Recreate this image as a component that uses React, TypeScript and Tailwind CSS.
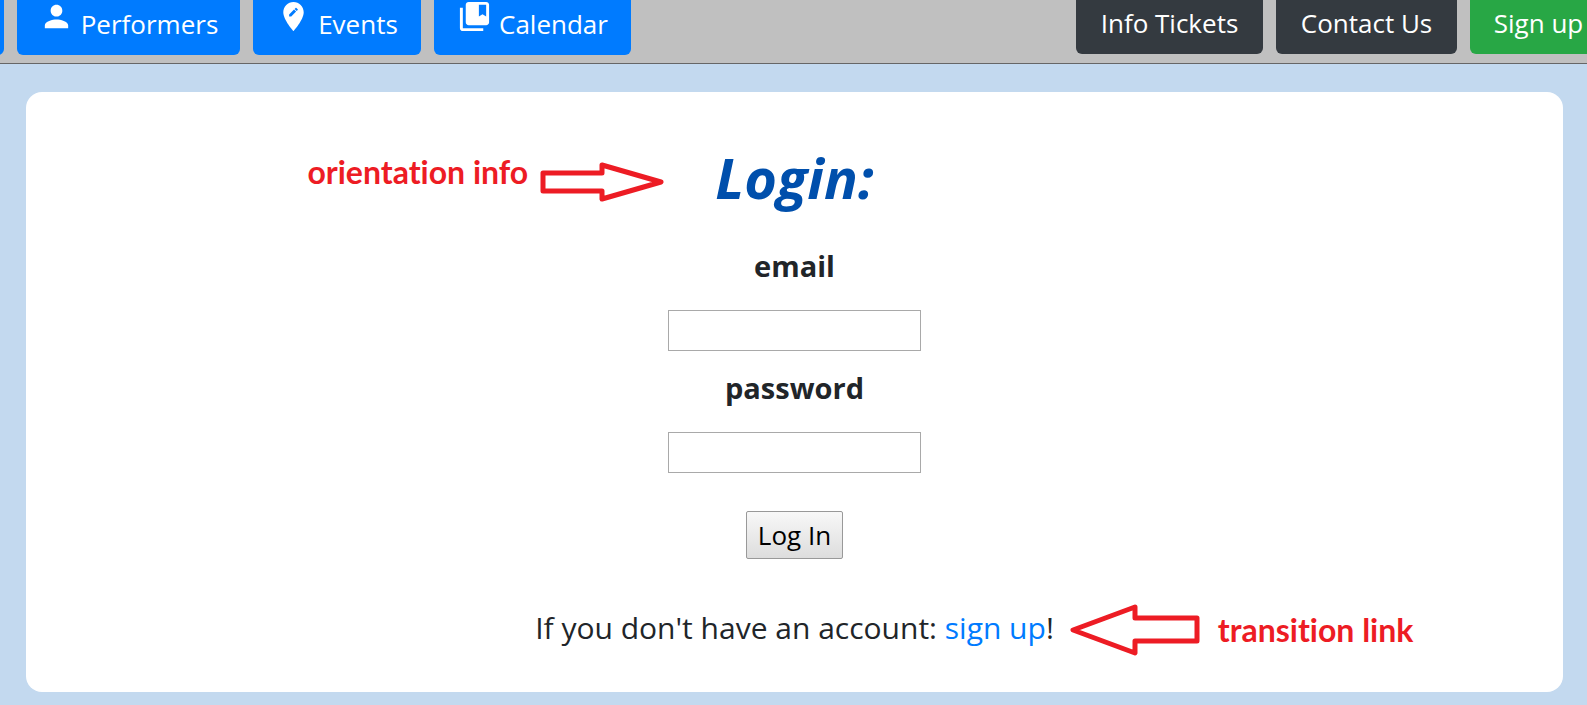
import type { ReactNode } from "react";

const navButton =
  "flex h-16 shrink-0 items-end justify-center whitespace-nowrap rounded-md pb-[13px] text-[26px] leading-9 text-white";

function PersonIcon() {
  return (
    <svg viewBox="0 0 24 24" className="h-[35px] w-[35px]" fill="currentColor" aria-hidden="true">
      <path d="M12 12c2.21 0 4-1.79 4-4s-1.79-4-4-4-4 1.79-4 4 1.79 4 4 4zm0 2c-2.67 0-8 1.34-8 4v2h16v-2c0-2.66-5.33-4-8-4z" />
    </svg>
  );
}

function PinIcon() {
  return (
    <svg viewBox="0 0 24 24" className="h-[35px] w-[35px]" fill="currentColor" aria-hidden="true">
      <path d="M12 2C8.14 2 5 5.14 5 9c0 5.25 7 13 7 13s7-7.75 7-13c0-3.86-3.14-7-7-7zm-1.56 10H9v-1.44l3.35-3.34 1.43 1.43L10.44 12zm4.45-4.45l-.7.7-1.44-1.44.7-.7c.15-.15.39-.15.54 0l.9.9c.15.15.15.39 0 .54z" />
    </svg>
  );
}

function BookmarksIcon() {
  return (
    <svg viewBox="0 0 24 24" className="h-[35px] w-[35px]" fill="currentColor" aria-hidden="true">
      <path d="M4 6H2v14c0 1.100.9 2 2 2h14v-2H4V6z" />
      <path d="M20 2H8c-1.100 0-2 .9-2 2v12c0 1.100.9 2 2 2h12c1.100 0 2-.9 2-2V4c0-1.100-.9-2-2-2zm0 10l-2.500-1.500L15 12V4h5v8z" />
    </svg>
  );
}

function NavItem({ icon, label, width }: { icon: ReactNode; label: string; width: string }) {
  return (
    <a href="#" className={`${navButton} ${width} gap-[7px] bg-[#007bff]`}>
      <span className="mb-2">{icon}</span>
      {label}
    </a>
  );
}

export default function App() {
  return (
    <div className="min-h-screen bg-[#c3d9ef] pb-3 font-['Open_Sans',sans-serif] text-[#212529]">
      <header className="flex h-16 items-end justify-between overflow-hidden border-b border-[#666] bg-[#c0c0c0] pb-2">
        <nav className="-ml-24 flex gap-[13px]">
          <a href="#" aria-label="Home" className={`${navButton} w-[100px] bg-[#007bff]`} />
          <NavItem icon={<PersonIcon />} label="Performers" width="w-[223px]" />
          <NavItem icon={<PinIcon />} label="Events" width="w-[168px]" />
          <NavItem icon={<BookmarksIcon />} label="Calendar" width="w-[197px]" />
        </nav>
        <nav className="-mr-5 flex gap-[13px] pb-px">
          <a href="#" className={`${navButton} w-[187px] bg-[#343a40]`}>Info Tickets</a>
          <a href="#" className={`${navButton} w-[181px] bg-[#343a40]`}>Contact Us</a>
          <a href="#" className={`${navButton} w-[137px] bg-[#28a745]`}>Sign up</a>
        </nav>
      </header>

      <main className="ml-[26px] mr-6 mt-7 rounded-2xl bg-white pb-11 pt-12">
        <form className="flex flex-col items-center" onSubmit={(e) => e.preventDefault()}>
          <div className="relative">
            <h1 className="text-[56px] font-bold italic leading-[74px] text-[#004fac]">Login:</h1>
            <div className="absolute right-full top-3.5 mr-[51px] flex items-center gap-3 text-[#ed1c24]">
              <span className="whitespace-nowrap pb-5 font-['Lato',sans-serif] text-[32px] font-bold leading-9 [font-variant-ligatures:none]">
                orientation info
              </span>
              <svg viewBox="0 0 124 42" className="h-[42px] w-[124px]" fill="none" stroke="currentColor" strokeWidth="5" strokeLinejoin="round" aria-hidden="true">
                <path d="M3 12H62V4L121 21L62 38V30H3Z" />
              </svg>
            </div>
          </div>

          <label htmlFor="email" className="mt-8 text-[29px] font-bold leading-10">email</label>
          <input id="email" type="email" className="mt-6 h-[41px] w-[253px] border border-[#a9a9a9] px-2 text-2xl" />
          <label htmlFor="password" className="mt-[17px] text-[29px] font-bold leading-10">password</label>
          <input id="password" type="password" className="mt-6 h-[41px] w-[253px] border border-[#a9a9a9] px-2 text-2xl" />

          <button type="submit" className="mt-[38px] h-12 w-[97px] rounded-xs border border-[#999] bg-linear-to-b from-[#f8f8f8] to-[#dddddd] text-[26px] leading-9 text-black">
            Log In
          </button>

          <div className="relative mt-[49px]">
            <p className="whitespace-nowrap text-[30px] leading-10">
              If you don't have an account: <a href="#" className="text-[#007bff]">sign up</a>!
            </p>
            <div className="absolute -top-1 left-full ml-4 flex items-center gap-[18px] text-[#ed1c24]">
              <svg viewBox="0 0 130 52" className="h-[52px] w-[130px]" fill="none" stroke="currentColor" strokeWidth="5" strokeLinejoin="round" aria-hidden="true">
                <path d="M127 14H65V3L3 26L65 49V37H127Z" />
              </svg>
              <span className="whitespace-nowrap font-['Lato',sans-serif] text-[32px] font-bold leading-9 [font-variant-ligatures:none]">
                transition link
              </span>
            </div>
          </div>
        </form>
      </main>
    </div>
  );
}
